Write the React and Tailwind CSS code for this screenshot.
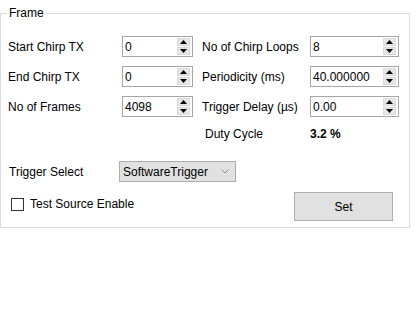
import React from 'react';

const Spinner = () => (
  <div className="flex flex-col gap-[1px] mr-[2px]">
    <div className="flex h-[8px] w-[13px] items-center justify-center border border-[#dadada] bg-[#e6e6e6]">
      <svg width="7" height="4" viewBox="0 0 7 4"><path d="M0 4 L3.5 0 L7 4 Z" fill="#000" /></svg>
    </div>
    <div className="flex h-[8px] w-[13px] items-center justify-center border border-[#dadada] bg-[#e6e6e6]">
      <svg width="7" height="4" viewBox="0 0 7 4"><path d="M0 0 L3.5 4 L7 0 Z" fill="#000" /></svg>
    </div>
  </div>
);

const NumBox = ({ value, width }) => (
  <div className={`flex h-[21px] items-center border border-[#a6a6a6] bg-white ${width}`}>
    <span className="flex-1 pl-[2px] pt-[1px]">{value}</span>
    <Spinner />
  </div>
);

const rows = [
  ['Start Chirp TX', '0', 'No of Chirp Loops', '8'],
  ['End Chirp TX', '0', 'Periodicity (ms)', '40.000000'],
  ['No of Frames', '4098', 'Trigger Delay (µs)', '0.00'],
];

export default function App() {
  return (
    <div className="h-[309px] w-[416px] bg-white pt-[13px] text-[12px] text-black" style={{ fontFamily: '"Liberation Sans", Arial, sans-serif' }}>
      <div className="relative h-[215px] w-[410px] border border-[#dcdcdc] pl-[7px] pt-[22px]">
        <span className="absolute left-[6px] top-[-8px] bg-white px-[2px] leading-[14px]">Frame</span>
        <div className="flex flex-col gap-[9px]">
          {rows.map(([l1, v1, l2, v2]) => (
            <div key={l1} className="flex h-[21px] items-center">
              <span className="w-[114px]">{l1}</span>
              <NumBox value={v1} width="w-[71px]" />
              <span className="ml-[9px] w-[108px]">{l2}</span>
              <NumBox value={v2} width="w-[89px]" />
            </div>
          ))}
        </div>
        <div className="mt-[6px] flex h-[21px] items-center">
          <span className="ml-[197px] w-[105px]">Duty Cycle</span>
          <span className="font-bold">3.2 %</span>
        </div>
        <div className="mt-[17px] flex h-[21px] items-center">
          <span className="ml-[1px] w-[110px]">Trigger Select</span>
          <div className="flex h-[21px] w-[117px] items-center justify-between border border-[#adadad] bg-[#e1e1e1] pl-[3px] pr-[6px]">
            <span>SoftwareTrigger</span>
            <svg width="8" height="5" viewBox="0 0 8 5"><path d="M0.5 0.5 L4 4 L7.5 0.5" fill="none" stroke="#8a8a8a" strokeWidth="1" /></svg>
          </div>
        </div>
        <div className="mt-[10px] flex items-start">
          <div className="ml-[3px] mt-[3px] flex items-center">
            <div className="h-[13px] w-[13px] border border-[#333]" />
            <span className="ml-[6px]">Test Source Enable</span>
          </div>
          <button className="ml-auto mr-[16px] flex h-[29px] w-[99px] items-center justify-center border border-[#adadad] bg-[#e1e1e1]">
            Set
          </button>
        </div>
      </div>
    </div>
  );
}
